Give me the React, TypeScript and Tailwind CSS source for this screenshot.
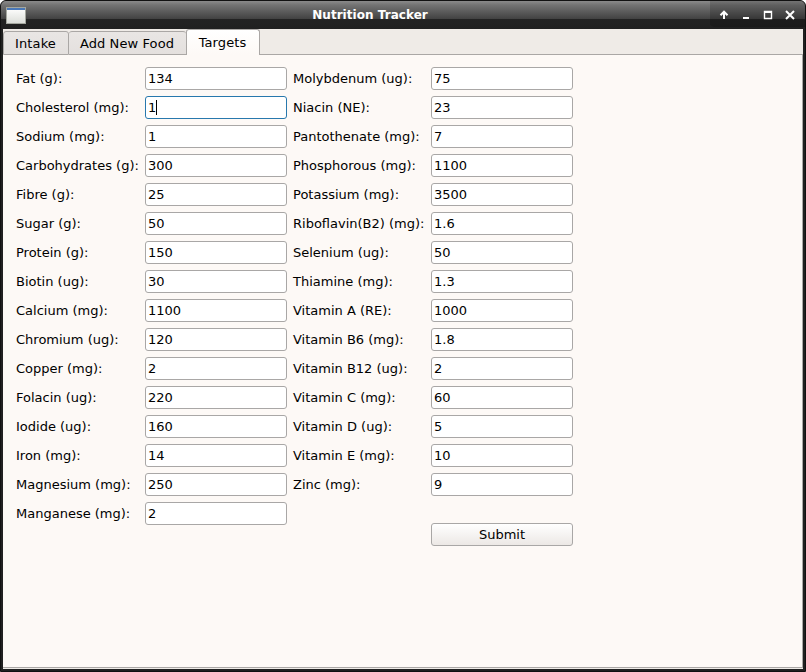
import React from "react";

type Target = { label: string; value: string; focused?: boolean };

const leftTargets: Target[] = [
  { label: "Fat (g):", value: "134" },
  { label: "Cholesterol (mg):", value: "1", focused: true },
  { label: "Sodium (mg):", value: "1" },
  { label: "Carbohydrates (g):", value: "300" },
  { label: "Fibre (g):", value: "25" },
  { label: "Sugar (g):", value: "50" },
  { label: "Protein (g):", value: "150" },
  { label: "Biotin (ug):", value: "30" },
  { label: "Calcium (mg):", value: "1100" },
  { label: "Chromium (ug):", value: "120" },
  { label: "Copper (mg):", value: "2" },
  { label: "Folacin (ug):", value: "220" },
  { label: "Iodide (ug):", value: "160" },
  { label: "Iron (mg):", value: "14" },
  { label: "Magnesium (mg):", value: "250" },
  { label: "Manganese (mg):", value: "2" },
];

const rightTargets: Target[] = [
  { label: "Molybdenum (ug):", value: "75" },
  { label: "Niacin (NE):", value: "23" },
  { label: "Pantothenate (mg):", value: "7" },
  { label: "Phosphorous (mg):", value: "1100" },
  { label: "Potassium (mg):", value: "3500" },
  { label: "Riboflavin(B2) (mg):", value: "1.6" },
  { label: "Selenium (ug):", value: "50" },
  { label: "Thiamine (mg):", value: "1.3" },
  { label: "Vitamin A (RE):", value: "1000" },
  { label: "Vitamin B6 (mg):", value: "1.8" },
  { label: "Vitamin B12 (ug):", value: "2" },
  { label: "Vitamin C (mg):", value: "60" },
  { label: "Vitamin D (ug):", value: "5" },
  { label: "Vitamin E (mg):", value: "10" },
  { label: "Zinc (mg):", value: "9" },
];

function Field({ target, labelWidth }: { target: Target; labelWidth: string }) {
  return (
    <div className="flex h-[23px] items-center">
      <span className={`${labelWidth} shrink-0 whitespace-nowrap`}>{target.label}</span>
      <div
        className={`flex h-[23px] w-[142px] items-center rounded-[3px] border bg-white pl-[2px] ${
          target.focused ? "border-[#2878ad]" : "border-[#a9a7a6]"
        }`}
      >
        <span>{target.value}</span>
        {target.focused && <span className="h-[15px] w-px bg-black" />}
      </div>
    </div>
  );
}

function TitleBar() {
  return (
    <div className="flex h-[28px] shrink-0 bg-[linear-gradient(to_bottom,#8a8a8a_0px,#737373_4px,#424242_18px,#232323_18px,#202020_28px)]">
      <div className="w-[202px] pt-[6px] pl-[5px]">
        <svg width="20" height="17" viewBox="0 0 20 17" shapeRendering="crispEdges">
          <defs>
            <linearGradient id="page" x1="0" y1="0" x2="0" y2="1">
              <stop offset="0" stopColor="#ffffff" />
              <stop offset="1" stopColor="#dcded9" />
            </linearGradient>
          </defs>
          <rect width="20" height="17" fill="#a4a79f" />
          <rect x="1" y="1" width="18" height="15" fill="url(#page)" />
          <rect x="1" y="1" width="18" height="2" fill="#4a78b8" />
        </svg>
      </div>
      <div className="flex-1 pt-[5px] text-center text-[12px] leading-[18px] font-bold tracking-[0.04px] text-white">
        Nutrition Tracker
      </div>
      <div className="flex w-[268px] justify-end">
        <svg width="95" height="28" viewBox="710 1 95 28">
          <path d="M709 1H805V27H714Q709 26 709 20Z" fill="#000" fillOpacity="0.16" />
          <path d="M724 19V12M720.5 15.2L724 11.7L727.5 15.2" fill="none" stroke="#fff" strokeWidth="2" />
          <path d="M743 17H749V19H743Z" fill="#fff" />
          <path d="M764 11H772V19H764ZM765 13V18H771V13Z" fill="#fff" fillRule="evenodd" />
          <path d="M764.5 11.5H771.5V18.5H764.5Z" fill="none" stroke="#fff" strokeWidth="1.4" />
          <path d="M786 11L794 19M794 11L786 19" stroke="#fff" strokeWidth="2" />
        </svg>
      </div>
    </div>
  );
}

export default function App() {
  return (
    <div className="h-[672px] w-[806px] overflow-hidden bg-white text-[13px] leading-[15px] text-black [font-family:'DejaVu_Sans',sans-serif]">
      <div className="flex h-full flex-col overflow-hidden rounded-t-[6px] border border-[#111] bg-[#202020]">
        <TitleBar />
        <div className="mr-[2px] mb-[2px] ml-[2px] flex flex-1 flex-col bg-[#efebe7]">
          <div className="flex h-[26px] shrink-0 items-end tracking-[0.1px]">
            <div className="flex h-[24px] w-[66px] items-center justify-center rounded-t-[3px] border border-[#aaa7a5] bg-linear-to-b from-[#e9e6e4] to-[#e4e0de] pr-[1px]">
              Intake
            </div>
            <div className="flex h-[24px] w-[117px] items-center justify-center rounded-t-[3px] border border-l-0 border-r-0 border-[#aaa7a5] bg-linear-to-b from-[#e9e6e4] to-[#e4e0de] pr-[1px]">
              Add New Food
            </div>
            <div className="flex h-[26px] w-[74px] items-center justify-center rounded-t-[3px] border border-b-0 border-[#aaa7a5] bg-linear-to-b from-white to-[#fdf9f6] pr-[1px]">
              Targets
            </div>
            <div className="h-px flex-1 bg-[#aaa7a5]" />
          </div>
          <main className="flex flex-1 items-start border-r border-b border-[#aaa7a5] bg-[#fdf9f6] pt-[12px] pl-[13px]">
            <div className="flex w-[277px] flex-col gap-[6px]">
              {leftTargets.map((t) => (
                <Field key={t.label} target={t} labelWidth="w-[129px]" />
              ))}
            </div>
            <div className="flex flex-col gap-[6px]">
              {rightTargets.map((t) => (
                <Field key={t.label} target={t} labelWidth="w-[138px]" />
              ))}
              <button className="mt-[21px] ml-[138px] h-[23px] w-[142px] rounded-[3px] border border-[#a9a7a6] bg-linear-to-b from-white to-[#ece8e5] leading-[15px]">
                Submit
              </button>
            </div>
          </main>
          <div className="h-px bg-[#efebe7]" />
        </div>
      </div>
    </div>
  );
}
